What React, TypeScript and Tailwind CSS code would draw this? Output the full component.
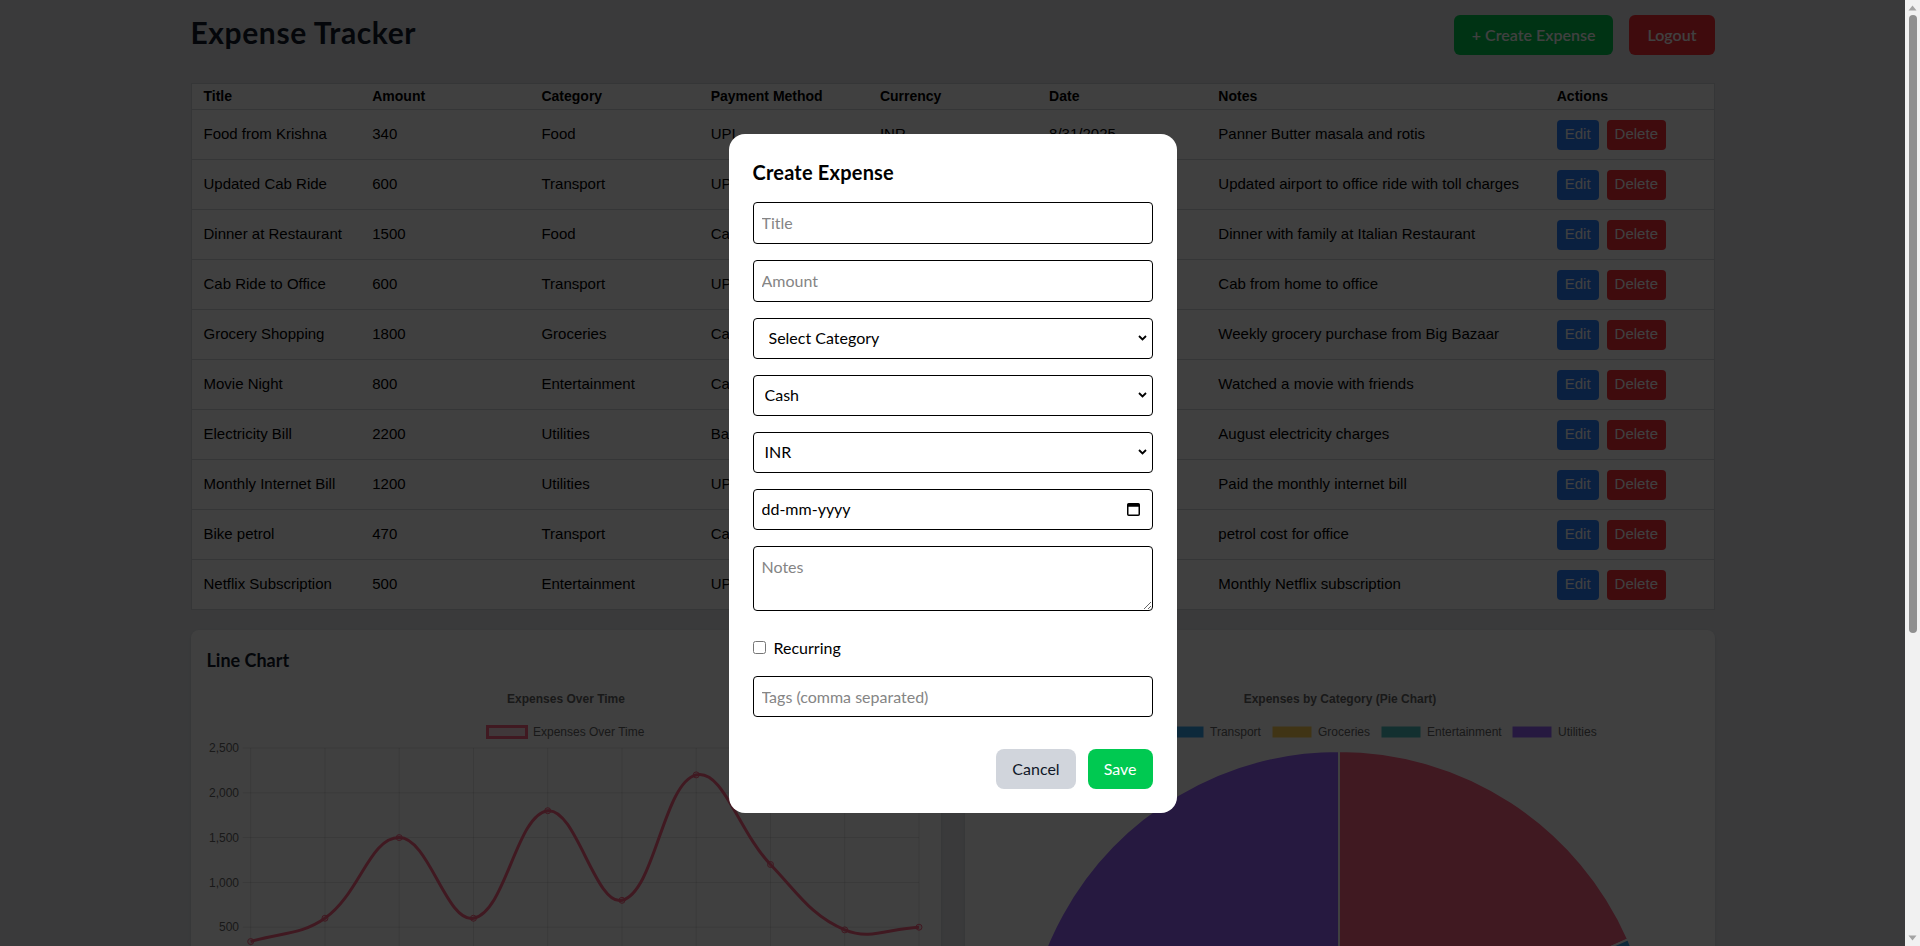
import React from "react";

type Expense = {
  title: string;
  amount: number;
  category: string;
  method: string;
  currency: string;
  date: string;
  notes: string;
};

const expenses: Expense[] = [
  { title: "Food from Krishna", amount: 340, category: "Food", method: "UPI", currency: "INR", date: "8/31/2025", notes: "Panner Butter masala and rotis" },
  { title: "Updated Cab Ride", amount: 600, category: "Transport", method: "UPI", currency: "INR", date: "8/30/2025", notes: "Updated airport to office ride with toll charges" },
  { title: "Dinner at Restaurant", amount: 1500, category: "Food", method: "Card", currency: "INR", date: "8/29/2025", notes: "Dinner with family at Italian Restaurant" },
  { title: "Cab Ride to Office", amount: 600, category: "Transport", method: "UPI", currency: "INR", date: "8/28/2025", notes: "Cab from home to office" },
  { title: "Grocery Shopping", amount: 1800, category: "Groceries", method: "Card", currency: "INR", date: "8/27/2025", notes: "Weekly grocery purchase from Big Bazaar" },
  { title: "Movie Night", amount: 800, category: "Entertainment", method: "Card", currency: "INR", date: "8/26/2025", notes: "Watched a movie with friends" },
  { title: "Electricity Bill", amount: 2200, category: "Utilities", method: "Bank Transfer", currency: "INR", date: "8/25/2025", notes: "August electricity charges" },
  { title: "Monthly Internet Bill", amount: 1200, category: "Utilities", method: "UPI", currency: "INR", date: "8/24/2025", notes: "Paid the monthly internet bill" },
  { title: "Bike petrol", amount: 470, category: "Transport", method: "Cash", currency: "INR", date: "8/23/2025", notes: "petrol cost for office" },
  { title: "Netflix Subscription", amount: 500, category: "Entertainment", method: "UPI", currency: "INR", date: "8/22/2025", notes: "Monthly Netflix subscription" },
];

const categoryColors: Record<string, string> = {
  Food: "rgb(255,99,132)",
  Transport: "rgb(54,162,235)",
  Groceries: "rgb(255,206,86)",
  Entertainment: "rgb(75,192,192)",
  Utilities: "rgb(153,102,255)",
};

const chartFont = "Liberation Sans, Arial, sans-serif";

// same spline as chart.js (tension 0.4)
function splinePath(pts: { x: number; y: number }[], t = 0.4) {
  const cps = pts.map((cur, i) => {
    const prev = pts[i - 1] ?? cur;
    const next = pts[i + 1] ?? cur;
    const d01 = Math.hypot(cur.x - prev.x, cur.y - prev.y);
    const d12 = Math.hypot(next.x - cur.x, next.y - cur.y);
    let s01 = d01 / (d01 + d12);
    let s12 = d12 / (d01 + d12);
    if (isNaN(s01)) s01 = 0;
    if (isNaN(s12)) s12 = 0;
    const fa = t * s01;
    const fb = t * s12;
    return {
      p: { x: cur.x - fa * (next.x - prev.x), y: cur.y - fa * (next.y - prev.y) },
      n: { x: cur.x + fb * (next.x - prev.x), y: cur.y + fb * (next.y - prev.y) },
    };
  });
  let d = `M${pts[0].x},${pts[0].y}`;
  for (let i = 1; i < pts.length; i++) {
    d += ` C${cps[i - 1].n.x},${cps[i - 1].n.y} ${cps[i].p.x},${cps[i].p.y} ${pts[i].x},${pts[i].y}`;
  }
  return d;
}

function LineChart() {
  const left = 43.7;
  const right = 712;
  const top = 66;
  const bottom = 290;
  const step = (right - left) / (expenses.length - 1);
  const y = (v: number) => bottom - (v / 2500) * (bottom - top);
  const pts = expenses.map((e, i) => ({ x: left + i * step, y: y(e.amount) }));
  const ticks = [2500, 2000, 1500, 1000, 500, 0];

  return (
    <svg width="718" height="359" viewBox="0 0 718 359">
      <text x="359" y="21" textAnchor="middle" fontFamily={chartFont} fontSize="12" fontWeight="bold" fill="#666">
        Expenses Over Time
      </text>
      <rect x="280.5" y="44.5" width="39" height="11" fill="rgba(255,99,132,0.2)" stroke="rgb(255,99,132)" strokeWidth="3" />
      <text x="326" y="54.3" fontFamily={chartFont} fontSize="12" fill="#666">
        Expenses Over Time
      </text>
      {ticks.map((t) => (
        <g key={t}>
          <line x1={left - 8} x2={right} y1={y(t)} y2={y(t)} stroke="rgba(0,0,0,0.1)" strokeWidth="1" />
          <text x="32" y={y(t) + 4.2} textAnchor="end" fontFamily={chartFont} fontSize="12" fill="#666">
            {t.toLocaleString("en-US")}
          </text>
        </g>
      ))}
      {pts.map((p, i) => (
        <line key={i} x1={p.x} x2={p.x} y1={top} y2={bottom + 8} stroke="rgba(0,0,0,0.1)" strokeWidth="1" />
      ))}
      {expenses.map((e, i) => (
        <text key={e.title} x={pts[i].x} y={bottom + 24} textAnchor="middle" fontFamily={chartFont} fontSize="12" fill="#666">
          {e.date}
        </text>
      ))}
      <path d={splinePath(pts)} fill="none" stroke="rgb(255,99,132)" strokeWidth="3" />
      {pts.map((p, i) => (
        <circle key={i} cx={p.x} cy={p.y} r="3" fill="rgba(255,99,132,0.2)" stroke="rgb(255,99,132)" strokeWidth="1" />
      ))}
    </svg>
  );
}

function PieChart() {
  const totals: { label: string; value: number }[] = [];
  expenses.forEach((e) => {
    const found = totals.find((t) => t.label === e.category);
    if (found) found.value += e.amount;
    else totals.push({ label: e.category, value: e.amount });
  });
  const sum = totals.reduce((a, b) => a + b.value, 0);
  const cx = 358;
  const cy = 385;
  const r = 316;
  let angle = -Math.PI / 2;
  const slices = totals.map((t) => {
    const a0 = angle;
    const a1 = angle + (t.value / sum) * Math.PI * 2;
    angle = a1;
    const large = a1 - a0 > Math.PI ? 1 : 0;
    const d = `M${cx},${cy} L${cx + r * Math.cos(a0)},${cy + r * Math.sin(a0)} A${r},${r} 0 ${large} 1 ${cx + r * Math.cos(a1)},${cy + r * Math.sin(a1)} Z`;
    return { ...t, d };
  });
  const legendX: Record<string, number> = { Food: 100, Transport: 183, Groceries: 291, Entertainment: 400, Utilities: 531 };

  return (
    <svg width="718" height="718" viewBox="0 0 718 718">
      <text x="359" y="21" textAnchor="middle" fontFamily={chartFont} fontSize="12" fontWeight="bold" fill="#666">
        Expenses by Category (Pie Chart)
      </text>
      {totals.map((t) => (
        <g key={t.label}>
          <rect x={legendX[t.label]} y="44" width="40" height="12" fill={categoryColors[t.label]} stroke="#fff" strokeWidth="1" />
          <text x={legendX[t.label] + 46} y="54.3" fontFamily={chartFont} fontSize="12" fill="#666">
            {t.label}
          </text>
        </g>
      ))}
      {slices.map((s) => (
        <path key={s.label} d={s.d} fill={categoryColors[s.label]} stroke="#fff" strokeWidth="2" />
      ))}
    </svg>
  );
}

function Chevron() {
  return (
    <svg width="9" height="6" viewBox="0 0 9 6" className="shrink-0">
      <path d="M1 1 L4.5 4.5 L8 1" fill="none" stroke="#000" strokeWidth="1.8" />
    </svg>
  );
}

function CalendarIcon() {
  return (
    <svg width="13" height="14" viewBox="0 0 13 14" className="shrink-0">
      <rect x="0.75" y="1.75" width="11.5" height="11.5" rx="1" fill="none" stroke="#000" strokeWidth="1.5" />
      <rect x="0.75" y="1.75" width="11.5" height="3" fill="#000" />
    </svg>
  );
}

function ScrollBar() {
  return (
    <div className="fixed top-0 right-0 h-screen w-[15px] bg-[#f1f1f1] flex flex-col items-center">
      <svg width="9" height="6" viewBox="0 0 9 6" className="mt-[5px] shrink-0">
        <path d="M0.5 5.5 L4.5 0.5 L8.5 5.5 Z" fill="#a3a3a3" />
      </svg>
      <div className="mt-[4px] w-[8px] h-[618px] rounded-full bg-[#8f8f8f]" />
      <div className="flex-1" />
      <svg width="9" height="6" viewBox="0 0 9 6" className="mb-[5px] shrink-0">
        <path d="M0.5 0.5 L4.5 5.5 L8.5 0.5 Z" fill="#a3a3a3" />
      </svg>
    </div>
  );
}

function ExpenseModal() {
  return (
    <div className="fixed top-0 bottom-0 left-0 right-[15px] bg-black/75 flex items-center justify-center">
      <div className="bg-white rounded-2xl p-6 w-[448px] text-black">
        <h2 className="text-xl font-bold mb-4 tracking-[0.2px]">Create Expense</h2>
        <form className="flex flex-col gap-4">
          <input type="text" placeholder="Title" className="border rounded h-[42px] px-2 outline-none placeholder:text-[#858585]" />
          <input type="text" placeholder="Amount" className="border rounded h-[42px] px-2 outline-none placeholder:text-[#858585]" />
          <div className="flex items-center border rounded h-[41px] pr-[5px]">
            <select className="flex-1 h-full appearance-none bg-transparent pl-[15px] outline-none">
              <option>Select Category</option>
              <option>Food</option>
              <option>Transport</option>
              <option>Groceries</option>
              <option>Entertainment</option>
              <option>Utilities</option>
            </select>
            <Chevron />
          </div>
          <div className="flex items-center border rounded h-[41px] pr-[5px]">
            <select className="flex-1 h-full appearance-none bg-transparent pl-[11px] outline-none">
              <option>Cash</option>
              <option>Card</option>
              <option>UPI</option>
              <option>Bank Transfer</option>
            </select>
            <Chevron />
          </div>
          <div className="flex items-center border rounded h-[41px] pr-[5px]">
            <select className="flex-1 h-full appearance-none bg-transparent pl-[11px] outline-none">
              <option>INR</option>
              <option>USD</option>
              <option>EUR</option>
            </select>
            <Chevron />
          </div>
          <div className="flex items-center border rounded h-[41px] pl-2 pr-3">
            <input type="text" placeholder="dd-mm-yyyy" className="flex-1 outline-none placeholder:text-black" />
            <CalendarIcon />
          </div>
          <textarea placeholder="Notes" rows={2} className="border rounded h-[65px] px-2 py-2 outline-none placeholder:text-[#858585]" />
          <label className="flex items-center gap-2 pt-[9px] h-[33px]">
            <input type="checkbox" className="m-0 w-[13px] h-[13px]" />
            <span>Recurring</span>
          </label>
          <input type="text" placeholder="Tags (comma separated)" className="border rounded h-[41px] px-2 outline-none placeholder:text-[#858585]" />
          <div className="flex justify-end gap-3 mt-4">
            <button type="button" className="bg-gray-300 text-gray-900 px-4 h-10 rounded-lg">Cancel</button>
            <button type="button" className="bg-green-500 text-white px-4 h-10 rounded-lg">Save</button>
          </div>
        </form>
      </div>
    </div>
  );
}

export default function App() {
  return (
    <div className="min-h-screen mr-[15px] bg-gray-200 pb-6 [font-family:Lato,'Segoe_UI',sans-serif]">
      <div className="w-4/5 mx-auto">
        {/* Header */}
        <header className="flex items-center justify-between pt-[15px]">
          <h1 className="text-3xl font-bold text-gray-900 -mt-1.5 tracking-[0.6px]">Expense Tracker</h1>
          <div className="flex gap-4">
            <button className="bg-green-500 text-white font-semibold px-[18px] h-10 rounded-md">+ Create Expense</button>
            <button className="bg-red-500 text-white font-semibold px-[18px] h-10 rounded-md">Logout</button>
          </div>
        </header>

        {/* Expenses table */}
        <table className="mt-7 w-full table-fixed border-collapse bg-white border border-gray-300 text-black [font-family:'Liberation_Sans',Arial,sans-serif]">
          <colgroup>
            <col className="w-[11.11%]" />
            <col className="w-[11.11%]" />
            <col className="w-[11.11%]" />
            <col className="w-[11.11%]" />
            <col className="w-[11.11%]" />
            <col className="w-[11.11%]" />
            <col className="w-[22.22%]" />
            <col className="w-[11.11%]" />
          </colgroup>
          <thead>
            <tr className="h-[26px] border-b border-gray-300 text-[14px] text-left">
              <th className="px-3 font-bold">Title</th>
              <th className="px-3 font-bold">Amount</th>
              <th className="px-3 font-bold">Category</th>
              <th className="px-3 font-bold">Payment Method</th>
              <th className="px-3 font-bold">Currency</th>
              <th className="px-3 font-bold">Date</th>
              <th className="px-3 font-bold">Notes</th>
              <th className="px-3 font-bold">Actions</th>
            </tr>
          </thead>
          <tbody>
            {expenses.map((e) => (
              <tr key={e.title} className="h-[50px] border-b border-gray-300 text-[15px]">
                <td className="px-3 whitespace-nowrap">{e.title}</td>
                <td className="px-3">{e.amount}</td>
                <td className="px-3">{e.category}</td>
                <td className="px-3 whitespace-nowrap">{e.method}</td>
                <td className="px-3">{e.currency}</td>
                <td className="px-3">{e.date}</td>
                <td className="px-3 whitespace-nowrap">{e.notes}</td>
                <td className="px-3 whitespace-nowrap">
                  <button className="bg-blue-500 text-white px-2 h-[30px] rounded mr-2">Edit</button>
                  <button className="bg-red-500 text-white px-2 h-[30px] rounded">Delete</button>
                </td>
              </tr>
            ))}
          </tbody>
        </table>

        {/* Charts */}
        <div className="grid grid-cols-2 gap-6 mt-5">
          <div className="bg-white rounded-lg shadow p-4">
            <h2 className="text-lg font-bold text-gray-900 mb-2">Line Chart</h2>
            <LineChart />
          </div>
          <div className="bg-white rounded-lg shadow p-4">
            <h2 className="text-lg font-bold text-gray-900 mb-2">Pie Chart</h2>
            <PieChart />
          </div>
        </div>
      </div>

      <ExpenseModal />
      <ScrollBar />
    </div>
  );
}
